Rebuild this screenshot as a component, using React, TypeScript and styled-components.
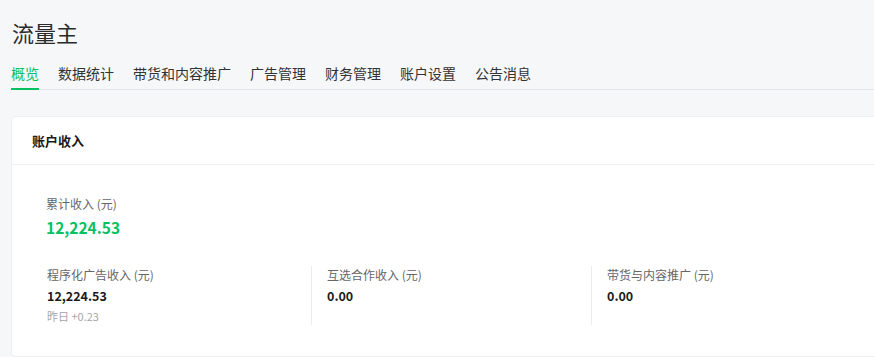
import styled, { createGlobalStyle } from "styled-components";

const GlobalStyle = createGlobalStyle`
  html, body {
    margin: 0;
    padding: 0;
    background: #f6f7f9;
    overflow: hidden;
  }
  body {
    font-family: "Noto Sans CJK SC", "Noto Sans", sans-serif;
    color: #333;
  }
`;

const Page = styled.div`
  padding: 14px 0 0 11px;
`;

const Title = styled.h1`
  margin: 0 0 0 1px;
  font-size: 22px;
  font-weight: 400;
  line-height: 36px;
  color: #2b2b2b;
`;

const TabBar = styled.nav`
  display: flex;
  gap: 19px;
  margin-top: 13px;
  border-bottom: 1px solid #e3e4e8;
`;

const Tab = styled.div<{ $active?: boolean }>`
  position: relative;
  padding-bottom: 6px;
  font-size: 14px;
  line-height: 20px;
  color: ${(p) => (p.$active ? "#07c160" : "#333")};
  cursor: pointer;

  &::after {
    content: "";
    position: absolute;
    left: 0;
    right: 0;
    bottom: -1px;
    height: 2px;
    background: ${(p) => (p.$active ? "#07c160" : "transparent")};
  }
`;

const Card = styled.section`
  margin-top: 26px;
  width: 1000px;
  background: #fff;
  border: 1px solid #eceef1;
  border-radius: 4px;
`;

const CardHeader = styled.div`
  height: 47px;
  display: flex;
  align-items: center;
  padding-left: 20px;
  border-bottom: 1px solid #eeeff2;
  font-size: 13px;
  font-weight: 700;
  color: #1a1a1a;
`;

const CardBody = styled.div`
  padding: 30px 19px 31px;
`;

const Total = styled.div`
  padding-left: 15px;
`;

const Label = styled.div`
  font-size: 12px;
  line-height: 18px;
  color: #666;
`;

const BigValue = styled.div`
  margin-top: 3px;
  font-size: 15.5px;
  font-weight: 700;
  line-height: 22px;
  color: #07c160;
`;

const Row = styled.div`
  display: flex;
  margin-top: 28px;
`;

const Col = styled.div<{ $first?: boolean }>`
  width: 280px;
  box-sizing: border-box;
  min-height: 58px;
  padding-left: 15px;
  border-left: 1px solid ${(p) => (p.$first ? "transparent" : "#ebecef")};
`;

const Value = styled.div`
  margin-top: 2px;
  font-size: 12.5px;
  font-weight: 700;
  line-height: 20px;
  color: #1a1a1a;
`;

const Yesterday = styled.div`
  margin-top: 1px;
  font-size: 11px;
  line-height: 18px;
  color: #a6a6a6;
`;

const tabs = ["概览", "数据统计", "带货和内容推广", "广告管理", "财务管理", "账户设置", "公告消息"];

const stats = [
  { label: "程序化广告收入 (元)", value: "12,224.53", sub: "昨日 +0.23" },
  { label: "互选合作收入 (元)", value: "0.00" },
  { label: "带货与内容推广 (元)", value: "0.00" },
];

export default function App() {
  return (
    <>
      <GlobalStyle />
      <Page>
        <Title>流量主</Title>
        <TabBar>
          {tabs.map((t, i) => (
            <Tab key={t} $active={i === 0}>
              {t}
            </Tab>
          ))}
        </TabBar>
        <Card>
          <CardHeader>账户收入</CardHeader>
          <CardBody>
            <Total>
              <Label>累计收入 (元)</Label>
              <BigValue>12,224.53</BigValue>
            </Total>
            <Row>
              {stats.map((s, i) => (
                <Col key={s.label} $first={i === 0}>
                  <Label>{s.label}</Label>
                  <Value>{s.value}</Value>
                  {s.sub && <Yesterday>{s.sub}</Yesterday>}
                </Col>
              ))}
            </Row>
          </CardBody>
        </Card>
      </Page>
    </>
  );
}
